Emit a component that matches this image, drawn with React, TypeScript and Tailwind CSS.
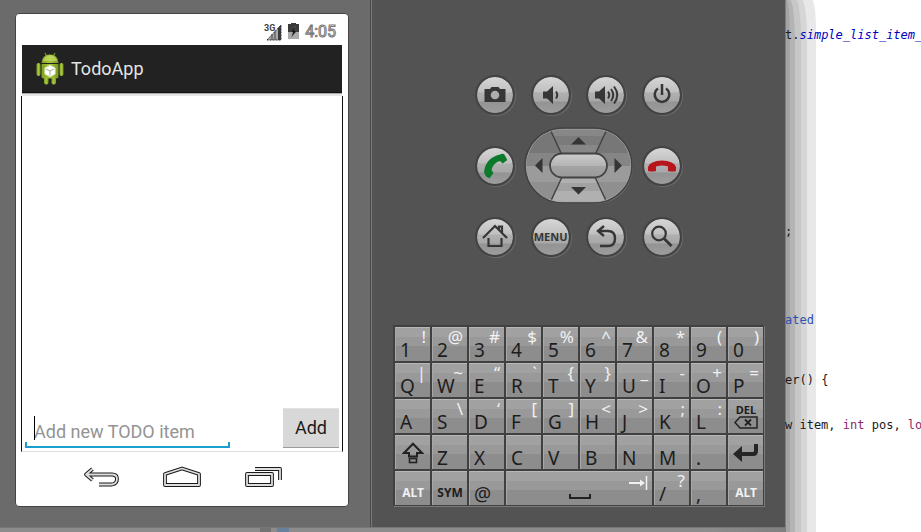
import React from "react";

type KeyDef = {
  main?: string;
  alt?: string;
  label?: string;
  icon?: React.ReactNode;
  text?: string;
  wide?: boolean;
};

const chars = (main: string, alts: string[]): KeyDef[] =>
  main.split("").map((m, i) => ({ main: m, alt: alts[i] }));

const ShiftIcon = () => (
  <svg width="22" height="22" viewBox="0 0 22 22" fill="none" stroke="#222" strokeWidth="2">
    <path d="M11 1.800 20 11H15V14.500H7V11H2Z" />
    <rect x="7.500" y="16.500" width="7" height="4" strokeWidth="1.600" />
  </svg>
);

const DeleteIcon = () => (
  <svg width="24" height="13" viewBox="0 0 24 13" fill="none" stroke="#222" strokeWidth="1.500">
    <path d="M1 6.500 6 1H23V12H6Z" />
    <path d="m11 3.500 6 6m0-6-6 6" strokeWidth="1.800" />
  </svg>
);

const EnterIcon = () => (
  <svg width="26" height="20" viewBox="0 0 26 20">
    <path d="M23 1V8Q23 11 20 11H7" fill="none" stroke="#262626" strokeWidth="4" />
    <path d="M0 11 9 3V19Z" fill="#262626" />
  </svg>
);

const TabIcon = () => (
  <svg width="19" height="14" viewBox="0 0 19 14" stroke="#f1f1f1" fill="#f1f1f1">
    <path d="M0 7H12" strokeWidth="2" />
    <path d="M11 3.500 16 7 11 10.500Z" stroke="none" />
    <path d="M17.500 0V14" strokeWidth="1.500" />
  </svg>
);

const rows: KeyDef[][] = [
  chars("1234567890", ["!", "@", "#", "$", "%", "^", "&", "*", "(", ")"]),
  chars("QWERTYUIOP", ["|", "~", "“", "`", "{", "}", "_", "-", "+", "="]),
  [
    ...chars("ASDFGHJKL", ["", "\\", "‘", "[", "]", "<", ">", ";", ":"]),
    { text: "DEL", label: "Delete", icon: <DeleteIcon /> },
  ],
  [
    { label: "Shift", icon: <ShiftIcon /> },
    ...chars("ZXCVBNM.", []),
    { label: "Enter", icon: <EnterIcon /> },
  ],
  [
    { text: "ALT" },
    { text: "SYM" },
    { main: "@" },
    { label: "Space", wide: true },
    { main: "/", alt: "?" },
    { main: "," },
    { text: "ALT" },
  ],
];

function Key({ k }: { k: KeyDef }) {
  const base =
    "grid min-w-0 h-[34px] border-t border-l border-t-[#b8b8b8] border-l-[#a8a8a8] bg-[linear-gradient(#a1a1a1_0_9px,#999_9px_18px,#8d8d8d_18px)] leading-none text-[#1d1d1d]";
  if (k.wide)
    return (
      <button aria-label={k.label} className={base + " col-span-4"}>
        <span className="[grid-area:1/1] justify-self-end pt-1 pr-1">
          <TabIcon />
        </span>
        <span className="[grid-area:1/1] mb-1.5 h-[5px] w-[22px] self-end justify-self-center border-x-2 border-b-2 border-[#222]" />
      </button>
    );
  if (k.main)
    return (
      <button className={base}>
        <span className="[grid-area:1/1] self-end justify-self-start pb-0.5 pl-1 text-[19px] leading-[18px]">
          {k.main}
        </span>
        {k.alt && (
          <span className="[grid-area:1/1] self-start justify-self-end pr-1 text-[17px] leading-[18px] text-[#f1f1f1]">
            {k.alt}
          </span>
        )}
      </button>
    );
  if (k.text && k.icon)
    return (
      <button aria-label={k.label} className={base + " content-center justify-items-center gap-px"}>
        <span className="text-[11px] font-bold leading-[11px]">{k.text}</span>
        {k.icon}
      </button>
    );
  if (k.text)
    return (
      <button
        className={
          base +
          " items-end justify-items-center pb-1.5 text-xs font-bold" +
          (k.text === "ALT" ? " text-[#f1f1f1]!" : "")
        }
      >
        {k.text}
      </button>
    );
  return (
    <button aria-label={k.label} className={base + " place-content-center"}>
      {k.icon}
    </button>
  );
}

function Round({ label, children }: { label: string; children: React.ReactNode }) {
  return (
    <button
      aria-label={label}
      className="grid size-10 place-items-center rounded-full border-2 border-[#434343] bg-[linear-gradient(#d6d6d6_0,#c0c0c0_15px,#b0b0b0_16px,#a8a8a8_24px,#939393_25px,#9d9d9d_36px)] bg-clip-padding text-[#363636] shadow-[1px_1px_0_#6a6a6a]"
    >
      {children}
    </button>
  );
}

function Glyph({ children, w = 2 }: { children: React.ReactNode; w?: number }) {
  return (
    <svg width="28" height="28" viewBox="0 0 28 28" fill="none" stroke="currentColor" strokeWidth={w}>
      {children}
    </svg>
  );
}

const Speaker = ({ x }: { x: number }) => (
  <path
    d={`M${x} 10.500h4l6-5.500v18l-6-5.500h-4Z`}
    fill="currentColor"
    stroke="none"
  />
);

function DPad() {
  return (
    <svg width="110" height="78" viewBox="0 0 110 78" role="img" aria-label="Directional pad">
      <defs>
        <clipPath id="pad">
          <rect x="2" y="2" width="105" height="73" rx="36.500" />
        </clipPath>
        <linearGradient id="ok" x2="0" y2="1">
          <stop offset="0" stopColor="#cdcdcd" />
          <stop offset=".5" stopColor="#b4b4b4" />
          <stop offset=".52" stopColor="#a4a4a4" />
          <stop offset="1" stopColor="#999" />
        </linearGradient>
      </defs>
      <rect x="2" y="2" width="107" height="75" rx="37" fill="#6d6d6d" />
      <g clipPath="url(#pad)">
        <path fill="#777" d="M0 0h110v26H0z" />
        <path fill="#858585" d="M0 26h110v13H0z" />
        <path fill="#9b9b9b" d="M0 39h110v16H0z" />
        <path fill="#8f8f8f" d="M0 55h110v23H0z" />
        <path fill="#878787" d="M25 0h59L72 27H38Z" />
        <path fill="#7b7b7b" d="M28 9h53l-5 9H33Z" />
        <path fill="#b0b0b0" d="M38 50h34l12 28H25Z" />
        <path fill="#a2a2a2" d="M34 56h41l4 8H31Z" />
        <path d="M25 0 38 28M84 0 71 28M38 50 25 78M71 50l13 28" stroke="#444" strokeWidth="1.500" />
      </g>
      <rect x="2" y="2" width="105" height="73" rx="36.500" fill="none" stroke="#a5a5a5" />
      <rect x="1" y="1" width="107" height="75" rx="37.500" fill="none" stroke="#434343" strokeWidth="1.600" />
      <rect x="26" y="26.500" width="57" height="24" rx="12" fill="url(#ok)" stroke="#434343" strokeWidth="1.800" />
      <path d="M47 17.500 54.500 10 62 17.500ZM47 60h15l-7.500 7.500ZM18.500 31v15L11 38.500ZM90.500 31v15L98 38.500Z" fill="#353535" />
    </svg>
  );
}

function RemoteControls() {
  return (
    <div className="flex w-[207px] flex-col gap-3">
      <div className="flex justify-between">
        <Round label="Camera">
          <Glyph>
            <path d="M3.500 8H9l1.500-2h7L19 8h5.500v13h-21Z" fill="currentColor" stroke="none" />
            <circle cx="14" cy="14" r="4.300" fill="#adadad" stroke="none" />
          </Glyph>
        </Round>
        <Round label="Volume down">
          <Glyph>
            <Speaker x={6} />
            <path d="M19 10.500q2.500 3.500 0 7" />
          </Glyph>
        </Round>
        <Round label="Volume up">
          <Glyph>
            <Speaker x={3} />
            <path d="M16 10.500q2.500 3.500 0 7M19 8q4.500 6 0 12M22 5.500q6.500 8.500 0 17" />
          </Glyph>
        </Round>
        <Round label="Power">
          <Glyph w={2.5}>
            <path d="M10 7.500a7.300 7.300 0 1 0 8 0M14 3v11" />
          </Glyph>
        </Round>
      </div>
      <div className="-mx-px flex items-center justify-between px-px">
        <Round label="Call">
          <Glyph>
            <path
              d="M19 2.500q3-1.500 4.500.2L26.300 8l-4.600 3.500L19 9q-7 2-8.500 9l2 3-4 5.200L5 24.500 3 20Q4.500 6 19 2.500Z"
              fill="#0d7a2b"
              stroke="none"
            />
          </Glyph>
        </Round>
        <DPad />
        <Round label="End call">
          <Glyph>
            <path
              d="M0 19v-4q2-6 14-6.500Q26 9 28 15v4q-4 1-8 0v-4.500q-6-2-12 0V19q-4 1-8 0Z"
              fill="#b8141b"
              stroke="none"
            />
          </Glyph>
        </Round>
      </div>
      <div className="flex justify-between">
        <Round label="Home">
          <Glyph w={2.2}>
            <path d="M2 15 14 3 26 15M18 7V3.500h3V10M7.500 15v8h13v-8" />
          </Glyph>
        </Round>
        <Round label="Menu">
          <span className="text-[11px] font-bold">MENU</span>
        </Round>
        <Round label="Back">
          <Glyph w={2.4}>
            <path d="M12 3 6 8l6 5M6.500 8H16q7 0 7 7.500T16 23H8" />
          </Glyph>
        </Round>
        <Round label="Search">
          <Glyph w={2.2}>
            <circle cx="11" cy="10.500" r="6.800" />
            <path d="m16 15.500 7.500 7.500" strokeWidth="2.800" />
          </Glyph>
        </Round>
      </div>
    </div>
  );
}

function AndroidLogo() {
  return (
    <svg width="28" height="33" viewBox="0 0 28 33">
      <defs>
        <linearGradient id="bot">
          <stop offset="0" stopColor="#7f9f25" />
          <stop offset=".5" stopColor="#a8c83c" />
          <stop offset="1" stopColor="#769622" />
        </linearGradient>
      </defs>
      <path d="m9 1 2 4M19 1l-2 4" stroke="#7d9b2b" strokeWidth="1.200" />
      <g fill="url(#bot)">
        <path d="M5.500 11Q6 2.500 14 2.500T22.500 11Z" />
        <path d="M5.500 12h17v12.500q0 2-2 2h-13q-2 0-2-2Z" />
        <rect x=".5" y="11" width="4" height="13" rx="2" />
        <rect x="23.500" y="11" width="4" height="13" rx="2" />
        <rect x="8" y="25" width="4.500" height="7.500" rx="2" />
        <rect x="15.500" y="25" width="4.500" height="7.500" rx="2" />
      </g>
      <path d="M7 9q1-5 7-5.500T21 9Z" fill="#c4dc68" opacity=".7" />
      <path d="m14 13.500 5 2.500v6l-5 2.500L9 22v-6Z" fill="#fff" stroke="#e9efd2" />
      <path d="m10 17 4 2 4-2M14 19v4.500" fill="none" stroke="#9aa08a" strokeWidth=".9" />
    </svg>
  );
}

function OutlinedIcon({ d, label }: { d: string; label: string }) {
  return (
    <button aria-label={label}>
      <svg width="40" height="22" viewBox="0 0 40 22" fill="none">
        <path d={d} stroke="#1b1b1b" strokeWidth="3.800" strokeLinejoin="round" />
        <path d={d} stroke="#dedede" strokeWidth="1.800" strokeLinejoin="round" />
      </svg>
    </button>
  );
}

function PhoneScreen() {
  return (
    <section className="flex w-[334px] flex-1 flex-col rounded border border-[#454545] bg-white px-1.5 font-[Roboto,sans-serif]">
      <div className="flex h-[31px] items-center justify-end gap-1.5 pt-1 pr-1.5">
        <svg width="18" height="18" viewBox="0 0 18 18" aria-label="3G signal">
          <path d="M3 17 17 2v15Z" fill="#aaa" stroke="#333" strokeDasharray="2 1" />
          <path d="M14 5 17 2v15h-3Z" fill="#3a3a3a" />
          <path d="M8 11v6M11 8v9" stroke="#444" />
          <text x="0" y="8" fontSize="9" fontWeight="700" fill="#444">3G</text>
        </svg>
        <svg width="11" height="17" viewBox="0 0 11 17" aria-label="Battery charging">
          <path d="M0 1h3V0h5v1h3v9H0Z" fill="#3a3a3a" />
          <path d="M0 9h11v7H0Z" fill="#aaa" />
          <path d="M7 3 2.500 9H5l-1.500 5L9 7.500H6.500Z" fill="#151515" stroke="#777" strokeWidth=".4" />
        </svg>
        <span className="text-base leading-none text-white [-webkit-text-stroke:1px_#777]">4:05</span>
      </div>
      <header className="flex h-12 shrink-0 items-center gap-[7px] border-b border-[#111] bg-[#222] pl-3.5 text-[#e4e4e4]">
        <AndroidLogo />
        <h1 className="text-lg">TodoApp</h1>
      </header>
      <div className="h-[3px] shrink-0 border-t border-[#aaa] bg-[#e6e6e6]" />
      <main className="-mx-px flex flex-1 flex-col justify-end border-x border-b border-x-[#111] border-b-[#ddd]">
        <form className="flex items-end gap-[53px] px-[3px] pb-[3px]" onSubmit={(e) => e.preventDefault()}>
          <div className="relative flex min-w-0 flex-1 border-b-2 border-[#1b9fcc]">
            <input
              aria-label="New TODO item"
              placeholder="Add new TODO item"
              className="h-[30px] w-full min-w-0 px-[9px] text-lg outline-none placeholder:text-[#939393] placeholder:opacity-100"
            />
            <span className="absolute top-0 left-[9px] h-6 w-px bg-black" />
            <span className="absolute bottom-0 left-0 h-1 w-0.5 bg-[#1b9fcc]" />
            <span className="absolute right-0 bottom-0 h-1 w-0.5 bg-[#1b9fcc]" />
          </div>
          <button className="h-10 w-14 shrink-0 border-t border-b border-t-[#e2e2e2] border-b-[#9b9b9b] bg-[#d8d8d8] text-lg text-[#1b1b1b]">
            Add
          </button>
        </form>
      </main>
      <nav className="flex h-[54px] shrink-0 items-center justify-center gap-[41px] pb-1">
        <OutlinedIcon label="Back" d="M11.500 3 5 8.500l6.500 5.500M6 8.500H31q5 0 5 4.500t-5 5.500H18" />
        <OutlinedIcon label="Home" d="M3 19V8L20 2.500 37 8v11Z" />
        <OutlinedIcon label="Recent apps" d="M4 8h25v11H4ZM12 3H37V14" />
      </nav>
    </section>
  );
}

const layers = [
  "w-[31px] rounded-tr-[4px_30px] bg-[#e8e8e8]",
  "w-[22px] rounded-tr-[5px_40px] bg-[#d6d6d6]",
  "w-4 rounded-tr-[5px_40px] bg-[#c7c7c7]",
  "w-2.5 rounded-tr-[5px_45px] bg-[#b4b4b4]",
  "w-[5px] rounded-tr-[3px_50px] bg-[#a4a4a4]",
  "w-px bg-[#7e7e7e]",
];

function Editor() {
  return (
    <section className="relative min-w-0 flex-1 overflow-hidden bg-white">
      {layers.map((c) => (
        <div key={c} className={"absolute inset-y-0 left-0 " + c} />
      ))}
      <pre className="relative pt-[27px] font-['DejaVu_Sans_Mono',monospace] text-xs leading-4 text-[#1a1a1a]">
        <p>
          t.<i className="text-[#0000c0]">simple_list_item_1</i>
        </p>
        <p className="pt-[180px]">;</p>
        <p className="pt-[73px] text-[#2f4fb0]">ated</p>
        <p className="pt-11">er() {"{"}</p>
        <p className="pt-[29px]">
          w item, <span className="text-[#8b2a6b]">int</span> pos,{" "}
          <span className="text-[#8b2a6b]">long</span>
        </p>
      </pre>
    </section>
  );
}

export default function App() {
  return (
    <div className="flex min-h-screen bg-white">
      <div className="flex shrink-0 flex-col">
        <div className="flex flex-1">
          <div className="flex flex-col border-r border-[#7b7b7b] bg-[#6b6b6b]">
            <div className="flex flex-1 flex-col border-r border-[#484848] pt-[13px] pr-[21px] pb-5 pl-[15px]">
              <PhoneScreen />
            </div>
          </div>
          <section className="flex flex-col items-center justify-between bg-[#535353] px-[21px] pt-[75px] pb-[21px] font-['Noto_Sans',sans-serif]">
            <RemoteControls />
            <div className="grid w-[371px] grid-cols-10 gap-0.5 border-t border-l border-[#404040] bg-[#404040] p-px shadow-[1px_1px_0_#7a7a7a]">
              {rows.flat().map((k, i) => (
                <Key key={i} k={k} />
              ))}
            </div>
          </section>
        </div>
        <footer className="flex h-[5px] gap-1.5 border-t border-[#777] bg-[linear-gradient(90deg,#8c8c8c_90%,#808080)] pl-[260px]">
          <span className="w-[11px] bg-[#737373]" />
          <span className="w-3 bg-[#67809b]" />
        </footer>
      </div>
      <Editor />
    </div>
  );
}
